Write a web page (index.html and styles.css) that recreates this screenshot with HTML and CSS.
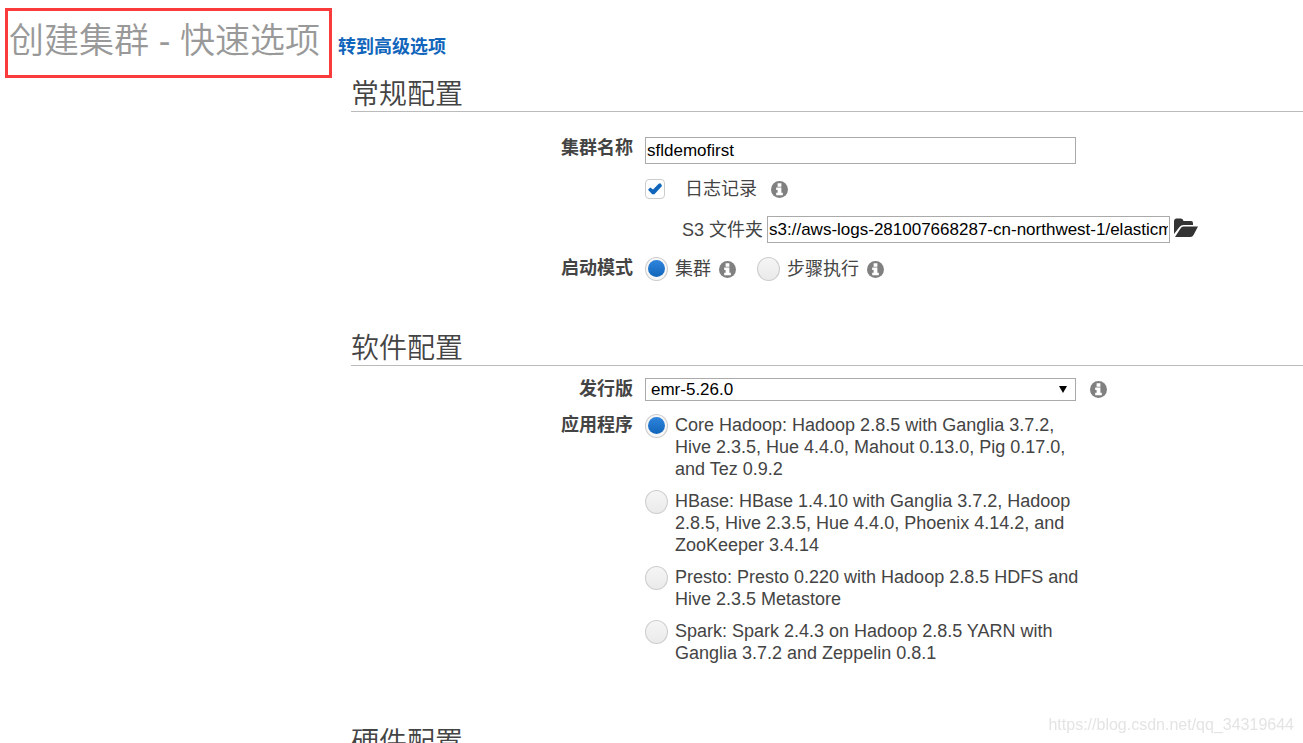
FILE: index.html
```html
<!DOCTYPE html>
<html lang="zh-CN">
    <head>
        <meta charset="UTF-8" />
        <meta name="viewport" content="width=device-width, initial-scale=1.0" />
        <title>创建集群 - 快速选项</title>
        <link rel="stylesheet" href="styles.css">
    </head>
    <body>
        <svg class="sprite" aria-hidden="true">
            <symbol id="info" viewBox="0 0 18 18">
                <circle cx="9" cy="9" r="9" fill="#808080" />
                <path fill="#fff" d="M7 2.500h4v3.500H7zM5.500 7H11v5.500h1.500V15h-7v-2.500H7v-3H5.500z" />
            </symbol>
        </svg>
        <header class="page-header">
            <h1>创建集群 - 快速选项</h1>
            <a href="#">转到高级选项</a>
        </header>
        <main>
            <section>
                <h2>常规配置</h2>
                <div class="row name-row">
                    <label class="label" for="name">集群名称</label>
                    <input class="text" type="text" id="name" value="sfldemofirst" />
                </div>
                <div class="row logging-row">
                    <div class="field inline">
                        <input type="checkbox" id="logging" checked />
                        <label for="logging">日志记录</label>
                        <svg class="info"><use href="#info" /></svg>
                    </div>
                </div>
                <div class="row folder-row">
                    <div class="field inline folder">
                        <label for="folder">S3 文件夹</label>
                        <input class="text" type="text" id="folder" value="s3://aws-logs-281007668287-cn-northwest-1/elasticmapreduce/" />
                        <button class="browse" type="button" aria-label="浏览">
                            <svg viewBox="0 0 24 20">
                                <path fill="#333" d="M0 16V3q0-2 2-2.500h5q2 0 2.500 2.500H17q2 0 2 2v2H9.500Q7 7 5.500 9z" />
                                <path fill="#333" d="M1 19l5.500-8.500Q7.500 8.500 9.500 8.500H24l-4.500 8.500q-1 2-3 2z" />
                            </svg>
                        </button>
                    </div>
                </div>
                <div class="row mode-row">
                    <span class="label" id="modeLabel">启动模式</span>
                    <div class="field inline" role="radiogroup" aria-labelledby="modeLabel">
                        <input type="radio" name="mode" id="cluster" checked />
                        <label for="cluster">集群</label>
                        <svg class="info"><use href="#info" /></svg>
                        <input type="radio" name="mode" id="step" />
                        <label for="step">步骤执行</label>
                        <svg class="info"><use href="#info" /></svg>
                    </div>
                </div>
            </section>
            <section>
                <h2>软件配置</h2>
                <div class="row release-row">
                    <label class="label" for="release">发行版</label>
                    <div class="field inline release">
                        <div class="select">
                            <select id="release">
                                <option>emr-5.26.0</option>
                            </select>
                        </div>
                        <svg class="info"><use href="#info" /></svg>
                    </div>
                </div>
                <div class="row apps-row">
                    <span class="label" id="appsLabel">应用程序</span>
                    <div class="options" role="radiogroup" aria-labelledby="appsLabel">
                        <div class="option">
                            <input type="radio" name="apps" id="core" checked />
                            <label for="core">Core Hadoop: Hadoop 2.8.5 with Ganglia 3.7.2, Hive 2.3.5, Hue 4.4.0, Mahout 0.13.0, Pig 0.17.0, and Tez 0.9.2</label>
                        </div>
                        <div class="option">
                            <input type="radio" name="apps" id="hbase" />
                            <label for="hbase">HBase: HBase 1.4.10 with Ganglia 3.7.2, Hadoop 2.8.5, Hive 2.3.5, Hue 4.4.0, Phoenix 4.14.2, and ZooKeeper 3.4.14</label>
                        </div>
                        <div class="option">
                            <input type="radio" name="apps" id="presto" />
                            <label for="presto">Presto: Presto 0.220 with Hadoop 2.8.5 HDFS and Hive 2.3.5 Metastore</label>
                        </div>
                        <div class="option">
                            <input type="radio" name="apps" id="spark" />
                            <label for="spark">Spark: Spark 2.4.3 on Hadoop 2.8.5 YARN with Ganglia 3.7.2 and Zeppelin 0.8.1</label>
                        </div>
                    </div>
                </div>
            </section>
            <section>
                <h2>硬件配置</h2>
            </section>
        </main>
        <div class="watermark">https://blog.csdn.net/qq_34319644</div>
    </body>
</html>
```
FILE: styles.css
```css
* {
    box-sizing: border-box;
}
body {
    margin: 0;
    background: #fff;
    color: #444;
    font-family: "Liberation Sans", "Noto Sans CJK SC", sans-serif;
    font-size: 18px;
    line-height: 22px;
}
.sprite {
    display: none;
}
.page-header {
    display: flex;
    align-items: flex-start;
    gap: 6px;
    padding: 8px 5px 0;
}
.page-header h1 {
    margin: 0;
    height: 70px;
    padding: 0 9px 0 1px;
    border: 3px solid #f93b3b;
    color: #999;
    font-size: 35px;
    font-weight: 350;
    line-height: 60px;
}
.page-header a {
    margin-top: 28px;
    color: #1166bb;
    font-weight: bold;
    text-decoration: none;
}
main {
    margin-left: 351px;
}
section {
    margin-bottom: 51px;
}
h2 {
    margin: 0 0 12px;
    border-bottom: 1px solid #bbb;
    font-size: 28px;
    font-weight: 350;
    line-height: 33px;
}
.row {
    display: grid;
    grid-template-columns: 282px minmax(0, 1fr);
    column-gap: 12px;
}
.label {
    font-weight: bold;
    text-align: right;
}
.field {
    grid-column: 2;
}
.inline {
    display: flex;
    align-items: center;
}
.name-row {
    margin-top: 25px;
}
.logging-row {
    margin-top: 14px;
}
.folder-row {
    margin-top: 16px;
}
.mode-row {
    margin-top: 14px;
}
.text {
    width: 431px;
    height: 27px;
    padding: 0 1px;
    border: 1px solid #aaa;
    color: #000;
    font-family: inherit;
    font-size: 17px;
}
.folder label {
    margin: 0 4px 0 37px;
}
.folder .text {
    width: 403px;
}
.browse {
    width: 24px;
    height: 20px;
    margin: 0 0 4px 4px;
    padding: 0;
    border: none;
    background: none;
    cursor: pointer;
}
.browse svg {
    display: block;
}
.info {
    width: 17px;
    height: 17px;
    margin-left: 14px;
}
input[type="checkbox"] {
    appearance: none;
    width: 20px;
    height: 20px;
    margin: 0 20px 0 0;
    border: 1px solid #ccc;
    border-radius: 4px;
}
input[type="checkbox"]:checked::before {
    content: "";
    display: block;
    width: 14px;
    height: 12px;
    margin: 3px 2px;
    background: #1166bb;
    clip-path: polygon(0 56%, 16% 38%, 36% 54%, 78% 4%, 92% 4%, 100% 24%, 46% 94%, 30% 94%);
}
input[type="radio"] {
    appearance: none;
    flex: none;
    width: 23px;
    height: 24px;
    margin: 0 7px 0 0;
    border: 1px solid #ccc;
    border-radius: 50%;
    background: linear-gradient(#f5f5f5, #eaeaea);
}
input[type="radio"]:checked {
    background: #f7f7f7;
}
input[type="radio"]:checked::before {
    content: "";
    display: block;
    width: 17px;
    height: 17px;
    margin: 2px;
    border-radius: 50%;
    background: linear-gradient(#2f84dc, #1166bb);
}
.mode-row .info {
    margin: 0 21px 0 8px;
}
.select {
    position: relative;
    width: 431px;
}
.select::after {
    content: "";
    position: absolute;
    top: 8px;
    right: 9px;
    border: 4px solid transparent;
    border-top: 7px solid #000;
    border-bottom: none;
    pointer-events: none;
}
select {
    appearance: none;
    display: block;
    width: 100%;
    height: 23px;
    padding: 0 5px;
    border: 1px solid #aaa;
    border-radius: 0;
    background: #fff;
    color: #000;
    font-family: inherit;
    font-size: 17px;
}
.release-row {
    margin-bottom: 13px;
}
.apps-row {
    margin-bottom: 62px;
}
.options {
    display: grid;
    gap: 10px;
    width: 438px;
}
.option {
    display: flex;
    align-items: flex-start;
}
.watermark {
    position: fixed;
    right: 9px;
    bottom: 7px;
    color: #e4e4e4;
    font-size: 16px;
}
```
